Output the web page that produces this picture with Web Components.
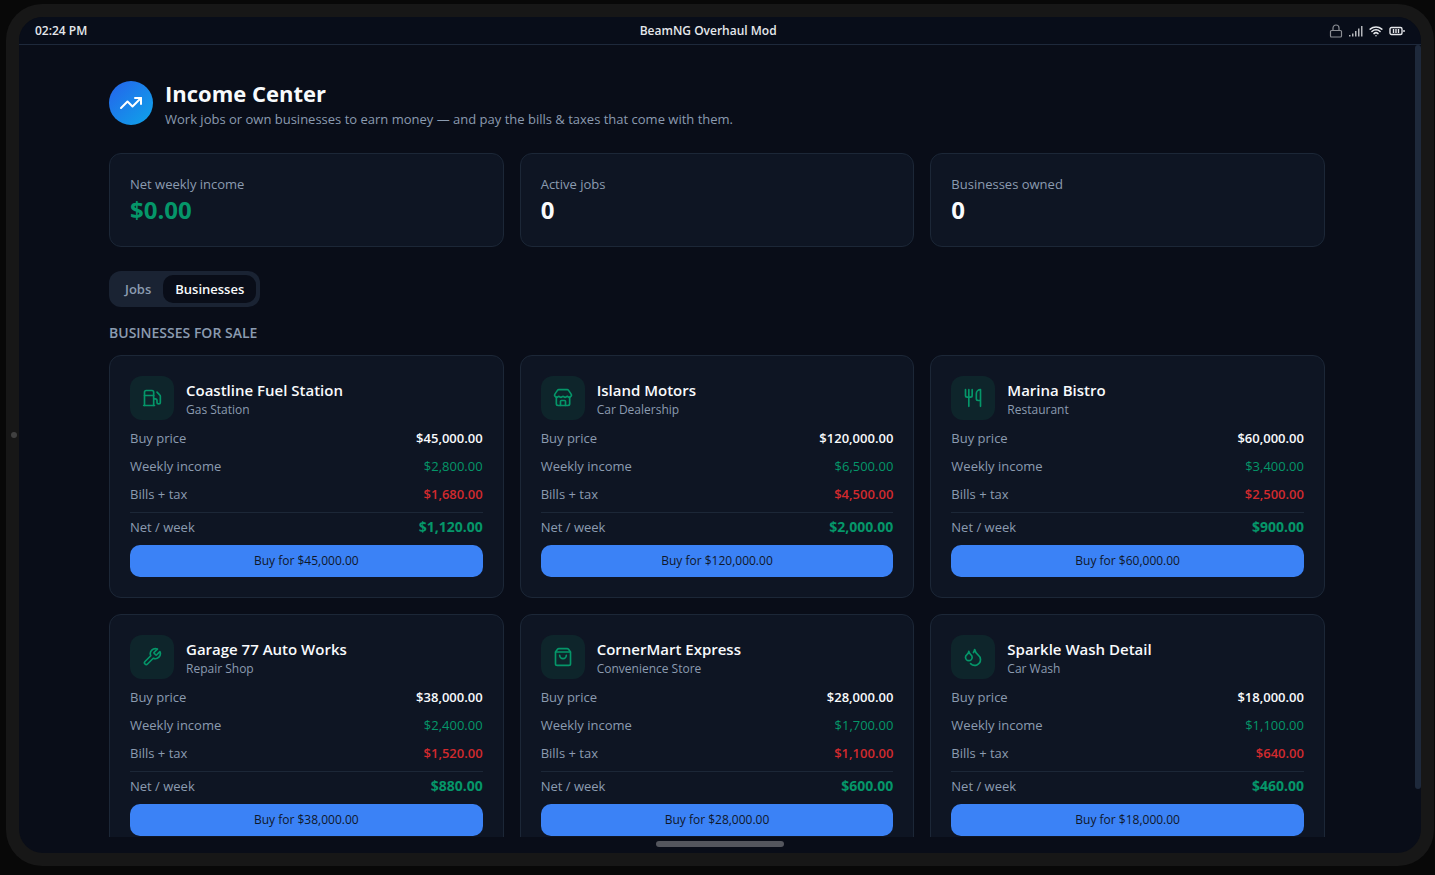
<!DOCTYPE html>
<html lang="en">
<head>
  <meta charset="UTF-8">
  <meta name="viewport" content="width=device-width, initial-scale=1.0">
  <title>Income Center</title>
  <style>
    html, body {
      height: 100%;
      margin: 0;
    }

    body {
      --background: #090d18;
      --card: #0e1523;
      --border: #1c2737;
      --muted: #8b9bb0;
      --primary: #3b82f6;
      --green: #059669;
      --red: #d12a2e;
      background: #080808;
      color: #f8fafc;
      font-family: "Open Sans", "Noto Sans", sans-serif;
      font-size: 13px;
      line-height: 20px;
    }
  </style>
</head>
<body>
  <tablet-frame>
    <status-bar slot="status" time="02:24 PM">BeamNG Overhaul Mod</status-bar>
    <page-header icon="trending">
      Income Center
      <span slot="subtitle">Work jobs or own businesses to earn money — and pay the bills &amp; taxes that come with them.</span>
    </page-header>
    <card-grid>
      <stat-card label="Net weekly income" tone="green">$0.00</stat-card>
      <stat-card label="Active jobs">0</stat-card>
      <stat-card label="Businesses owned">0</stat-card>
    </card-grid>
    <tab-switch></tab-switch>
    <business-list></business-list>
  </tablet-frame>

  <script>
    const ICONS = {
      trending: '<path d="M16 7h6v6"/><path d="m22 7-8.5 8.5-5-5L2 17"/>',
      fuel: '<path d="M14 13h2a2 2 0 0 1 2 2v2a2 2 0 0 0 4 0v-6.998a2 2 0 0 0-.59-1.42L18 5"/><path d="M14 21V5a2 2 0 0 0-2-2H5a2 2 0 0 0-2 2v16"/><path d="M2 21h13"/><path d="M3 9h11"/>',
      store: '<path d="M15 21v-5a1 1 0 0 0-1-1h-4a1 1 0 0 0-1 1v5"/><path d="M17.774 10.31a1.12 1.12 0 0 0-1.549 0 2.5 2.5 0 0 1-3.451 0 1.12 1.12 0 0 0-1.548 0 2.5 2.5 0 0 1-3.452 0 1.12 1.12 0 0 0-1.549 0 2.5 2.5 0 0 1-3.77-3.248l2.889-4.184A2 2 0 0 1 7 2h10a2 2 0 0 1 1.653.873l2.895 4.192a2.5 2.5 0 0 1-3.774 3.244"/><path d="M4 10.95V19a2 2 0 0 0 2 2h12a2 2 0 0 0 2-2v-8.05"/>',
      utensils: '<path d="M3 2v7c0 1.1.9 2 2 2h4a2 2 0 0 0 2-2V2"/><path d="M7 2v20"/><path d="M21 15V2a5 5 0 0 0-5 5v6c0 1.1.9 2 2 2h3Zm0 0v7"/>',
      wrench: '<path d="M14.7 6.3a1 1 0 0 0 0 1.4l1.6 1.6a1 1 0 0 0 1.4 0l3.77-3.77a6 6 0 0 1-7.94 7.94l-6.91 6.91a2.12 2.12 0 0 1-3-3l6.91-6.91a6 6 0 0 1 7.94-7.94l-3.76 3.76z"/>',
      bag: '<path d="M16 10a4 4 0 0 1-8 0"/><path d="M3.103 6.034h17.794"/><path d="M3.4 5.467a2 2 0 0 0-.4 1.2V20a2 2 0 0 0 2 2h14a2 2 0 0 0 2-2V6.667a2 2 0 0 0-.4-1.2l-2-2.667A2 2 0 0 0 17 2H7a2 2 0 0 0-1.6.8z"/>',
      droplets: '<path d="M7 16.3c2.2 0 4-1.83 4-4.05 0-1.16-.57-2.26-1.71-3.19S7.29 6.75 7 5.3c-.29 1.45-1.14 2.84-2.29 3.76S3 11.1 3 12.25c0 2.22 1.8 4.05 4 4.05z"/><path d="M12.56 6.6A10.97 10.97 0 0 0 14 3.02c.5 2.5 2 4.9 4 6.5s3 3.5 3 5.5a6.98 6.98 0 0 1-11.91 4.97"/>'
    };

    const BUSINESSES = [
      { name: 'Coastline Fuel Station', type: 'Gas Station', icon: 'fuel', price: 45000, income: 2800, bills: 1680 },
      { name: 'Island Motors', type: 'Car Dealership', icon: 'store', price: 120000, income: 6500, bills: 4500 },
      { name: 'Marina Bistro', type: 'Restaurant', icon: 'utensils', price: 60000, income: 3400, bills: 2500 },
      { name: 'Garage 77 Auto Works', type: 'Repair Shop', icon: 'wrench', price: 38000, income: 2400, bills: 1520 },
      { name: 'CornerMart Express', type: 'Convenience Store', icon: 'bag', price: 28000, income: 1700, bills: 1100 },
      { name: 'Sparkle Wash Detail', type: 'Car Wash', icon: 'droplets', price: 18000, income: 1100, bills: 640 }
    ];

    const money = (n) => n.toLocaleString('en-US', { style: 'currency', currency: 'USD' });

    const icon = (name, size) => `
      <svg width="${size}" height="${size}" viewBox="0 0 24 24" fill="none" stroke="currentColor"
        stroke-width="2" stroke-linecap="round" stroke-linejoin="round" aria-hidden="true">${ICONS[name]}</svg>`;

    class TabletFrame extends HTMLElement {
      connectedCallback() {
        this.attachShadow({ mode: 'open' });
        this.shadowRoot.innerHTML = `
          <style>
            :host {
              display: flex;
              box-sizing: border-box;
              height: 100vh;
              padding: 4px 1px 9px 6px;
            }

            .device {
              position: relative;
              flex: 1;
              display: flex;
              min-width: 0;
              padding: 13px;
              border-radius: 36px;
              background: #171717;
            }

            .camera {
              position: absolute;
              left: 5px;
              top: 50%;
              width: 6px;
              height: 6px;
              margin-top: -3px;
              border-radius: 50%;
              background: #404040;
            }

            .screen {
              flex: 1;
              display: flex;
              flex-direction: column;
              min-width: 0;
              border-radius: 24px;
              overflow: hidden;
              background: var(--background);
            }

            .body {
              flex: 1;
              display: flex;
              min-height: 0;
            }

            .scroll {
              flex: 1;
              overflow-y: auto;
              scrollbar-width: none;
            }

            main {
              display: flex;
              flex-direction: column;
              gap: 24px;
              box-sizing: border-box;
              max-width: 1280px;
              margin: 0 auto;
              padding: 32px;
            }

            .track {
              width: 6px;
            }

            .thumb {
              height: 94%;
              border-radius: 3px;
              background: #1e293b;
            }

            .home {
              display: flex;
              align-items: center;
              justify-content: center;
              height: 16px;
            }

            .home span {
              width: 128px;
              height: 6px;
              margin-bottom: 2px;
              border-radius: 3px;
              background: #54565d;
            }
          </style>
          <div class="device">
            <div class="camera"></div>
            <div class="screen">
              <slot name="status"></slot>
              <div class="body">
                <div class="scroll"><main><slot></slot></main></div>
                <div class="track"><div class="thumb"></div></div>
              </div>
              <div class="home"><span></span></div>
            </div>
          </div>
        `;
        const scroll = this.shadowRoot.querySelector('.scroll');
        const thumb = this.shadowRoot.querySelector('.thumb');
        scroll.addEventListener('scroll', () => {
          thumb.style.marginTop = `${scroll.scrollTop * scroll.clientHeight / scroll.scrollHeight}px`;
        });
      }
    }

    class StatusBar extends HTMLElement {
      connectedCallback() {
        this.attachShadow({ mode: 'open' });
        this.shadowRoot.innerHTML = `
          <style>
            :host {
              display: flex;
              align-items: center;
              justify-content: space-between;
              padding: 6px 16px 5px;
              border-bottom: 1px solid #1e293b;
              background: #080d19;
              color: #e5e7eb;
              font-size: 12px;
              font-weight: 600;
              line-height: 16px;
            }

            .icons {
              display: flex;
              align-items: center;
              gap: 6px;
            }

            .lock {
              color: #8a8d93;
            }
          </style>
          <time>${this.getAttribute('time')}</time>
          <span><slot></slot></span>
          <div class="icons">
            <svg class="lock" width="14" height="14" viewBox="0 0 14 14" fill="none" stroke="currentColor" stroke-width="1.2" stroke-linejoin="round" aria-hidden="true">
              <rect x="1.5" y="6.500" width="11" height="6.500" rx="1"/><path d="M4 6.500V4a3 3 0 0 1 6 0v2.500"/>
            </svg>
            <svg width="14" height="12" viewBox="0 0 14 12" fill="#b4b6bb" aria-hidden="true">
              <path d="M0 10h1.500v1.500H0zM3 8.500h1.500v3H3zM6 6h1.500v5.500H6zM9 3.500h1.500v8H9zM12 1h1.500v10.500H12z"/>
            </svg>
            <svg width="14" height="14" viewBox="0 0 24 24" fill="none" stroke="currentColor" stroke-width="2.600" stroke-linecap="round" aria-hidden="true">
              <path d="M12 20h.01M2 8.820a15 15 0 0 1 20 0M5 12.859a10 10 0 0 1 14 0M8.500 16.429a5 5 0 0 1 7 0"/>
            </svg>
            <svg width="16" height="10" viewBox="0 0 16 10" fill="none" stroke="currentColor" aria-hidden="true">
              <rect x="1" y="1.500" width="12" height="7" rx="1.500" stroke-width="1.400"/><path d="M4.500 3v4M7 3v4M9.500 3v4M15 4v2" stroke-width="1.400"/>
            </svg>
          </div>
        `;
      }
    }

    class PageHeader extends HTMLElement {
      connectedCallback() {
        this.attachShadow({ mode: 'open' });
        this.shadowRoot.innerHTML = `
          <style>
            :host {
              display: flex;
              align-items: center;
              gap: 12px;
            }

            .badge {
              display: flex;
              align-items: center;
              justify-content: center;
              width: 44px;
              height: 44px;
              border-radius: 50%;
              background: linear-gradient(to bottom right, #2563eb, #0ea5e9);
              color: #fff;
            }

            h1 {
              margin: 0;
              font-size: 22px;
              font-weight: 700;
              line-height: 32px;
            }

            p {
              margin: 0;
              color: var(--muted);
            }
          </style>
          <div class="badge">${icon(this.getAttribute('icon'), 24)}</div>
          <div>
            <h1><slot></slot></h1>
            <p><slot name="subtitle"></slot></p>
          </div>
        `;
      }
    }

    class CardGrid extends HTMLElement {
      connectedCallback() {
        this.attachShadow({ mode: 'open' });
        this.shadowRoot.innerHTML = `
          <style>
            :host {
              display: grid;
              grid-template-columns: repeat(3, minmax(0, 1fr));
              gap: 16px;
            }
          </style>
          <slot></slot>
        `;
      }
    }

    class StatCard extends HTMLElement {
      connectedCallback() {
        this.attachShadow({ mode: 'open' });
        this.shadowRoot.innerHTML = `
          <style>
            :host {
              display: block;
              padding: 20px;
              border: 1px solid var(--border);
              border-radius: 12px;
              background: var(--card);
            }

            .label {
              color: var(--muted);
            }

            .value {
              font-size: 24px;
              font-weight: 700;
              line-height: 32px;
            }

            :host([tone="green"]) .value {
              color: var(--green);
            }
          </style>
          <div class="label">${this.getAttribute('label')}</div>
          <div class="value"><slot></slot></div>
        `;
      }
    }

    class TabSwitch extends HTMLElement {
      connectedCallback() {
        this.attachShadow({ mode: 'open' });
        this.shadowRoot.innerHTML = `
          <style>
            :host {
              display: flex;
            }

            .tabs {
              display: flex;
              padding: 4px;
              border-radius: 12px;
              background: #1a2333;
            }

            button {
              padding: 4px 12px;
              border: 0;
              border-radius: 10px;
              background: none;
              color: var(--muted);
              font: inherit;
              font-weight: 600;
              cursor: pointer;
            }

            button[aria-selected="true"] {
              background: var(--background);
              color: #f8fafc;
            }
          </style>
          <div class="tabs" role="tablist">
            <button type="button" role="tab" aria-selected="false">Jobs</button>
            <button type="button" role="tab" aria-selected="true">Businesses</button>
          </div>
        `;
        const tabs = this.shadowRoot.querySelectorAll('button');
        tabs.forEach((tab) => tab.addEventListener('click', () => {
          tabs.forEach((t) => t.setAttribute('aria-selected', String(t === tab)));
        }));
      }
    }

    class BusinessCard extends HTMLElement {
      connectedCallback() {
        const b = this.business;
        this.attachShadow({ mode: 'open' });
        this.shadowRoot.innerHTML = `
          <style>
            :host {
              display: flex;
              flex-direction: column;
              gap: 8px;
              padding: 20px;
              border: 1px solid var(--border);
              border-radius: 12px;
              background: var(--card);
            }

            header {
              display: flex;
              align-items: center;
              gap: 12px;
            }

            .badge {
              display: flex;
              align-items: center;
              justify-content: center;
              width: 44px;
              height: 44px;
              border-radius: 12px;
              background: #0e252b;
              color: var(--green);
            }

            h3 {
              margin: 0;
              font-size: 15px;
              font-weight: 600;
              line-height: 24px;
            }

            .type {
              color: var(--muted);
              font-size: 12px;
              line-height: 16px;
            }

            dl {
              display: flex;
              flex-direction: column;
              gap: 8px;
              margin: 0;
            }

            dl div {
              display: flex;
              justify-content: space-between;
            }

            dl .net {
              padding-top: 4px;
              border-top: 1px solid var(--border);
            }

            dt {
              color: var(--muted);
            }

            dd {
              margin: 0;
              font-weight: 600;
            }

            .income dd, .net dd {
              color: var(--green);
            }

            .income dd {
              font-weight: 500;
            }

            .bills dd {
              color: var(--red);
            }

            .net dd {
              font-size: 14px;
              font-weight: 700;
            }

            button {
              height: 32px;
              border: 0;
              border-radius: 10px;
              background: var(--primary);
              color: #0f172a;
              font: inherit;
              font-size: 12px;
              font-weight: 500;
              cursor: pointer;
            }
          </style>
          <header>
            <div class="badge">${icon(b.icon, 20)}</div>
            <div>
              <h3>${b.name}</h3>
              <div class="type">${b.type}</div>
            </div>
          </header>
          <dl>
            <div><dt>Buy price</dt><dd>${money(b.price)}</dd></div>
            <div class="income"><dt>Weekly income</dt><dd>${money(b.income)}</dd></div>
            <div class="bills"><dt>Bills + tax</dt><dd>${money(b.bills)}</dd></div>
            <div class="net"><dt>Net / week</dt><dd>${money(b.income - b.bills)}</dd></div>
          </dl>
          <button type="button">Buy for ${money(b.price)}</button>
        `;
      }
    }

    class BusinessList extends HTMLElement {
      connectedCallback() {
        this.attachShadow({ mode: 'open' });
        this.shadowRoot.innerHTML = `
          <style>
            :host {
              display: block;
              margin-top: -8px;
            }

            h2 {
              margin: 0 0 12px;
              color: var(--muted);
              font-size: 14px;
              font-weight: 600;
              line-height: 20px;
              text-transform: uppercase;
            }
          </style>
          <h2>Businesses for sale</h2>
          <card-grid></card-grid>
        `;
        const grid = this.shadowRoot.querySelector('card-grid');
        BUSINESSES.forEach((business) => {
          const card = document.createElement('business-card');
          card.business = business;
          grid.append(card);
        });
      }
    }

    customElements.define('tablet-frame', TabletFrame);
    customElements.define('status-bar', StatusBar);
    customElements.define('page-header', PageHeader);
    customElements.define('card-grid', CardGrid);
    customElements.define('stat-card', StatCard);
    customElements.define('tab-switch', TabSwitch);
    customElements.define('business-card', BusinessCard);
    customElements.define('business-list', BusinessList);
  </script>
</body>
</html>
